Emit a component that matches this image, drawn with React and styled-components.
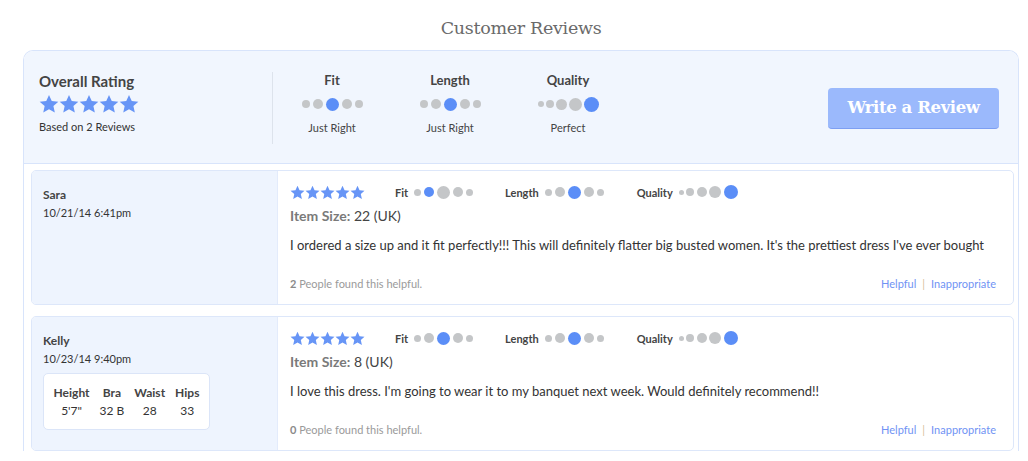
import React from 'react'
import styled, { createGlobalStyle } from 'styled-components'

const GlobalStyle = createGlobalStyle`
  body {
    margin: 0;
    background: #fff;
    font-family: Lato, "Open Sans", sans-serif;
    color: #444;
  }
`

const Page = styled.div`
  width: 996px;
  margin-left: 23px;
`

const Title = styled.h2`
  margin: 16px 0 10px;
  text-align: center;
  font-family: "DejaVu Serif", serif;
  font-weight: normal;
  font-size: 17.5px;
  line-height: 24px;
  letter-spacing: -0.3px;
  color: #6a6a6a;
`

const Box = styled.div`
  border: 1px solid #d8e4fb;
  border-bottom: none;
  border-radius: 10px 10px 0 0;
  overflow: hidden;
`

const Header = styled.div`
  display: flex;
  align-items: center;
  height: 112px;
  background: #f1f6fe;
  border-bottom: 1px solid #d8e4fb;
  padding: 0 19px 0 15px;
`

const Overall = styled.div`
  width: 233px;
  padding-bottom: 9px;
`

const OverallTitle = styled.div`
  font-weight: bold;
  font-size: 15px;
  line-height: 18px;
  color: #444;
`

const StarRow = styled.div`
  display: flex;
  gap: ${p => p.$gap}px;
  margin-top: ${p => p.$mt}px;
`

const Small = styled.div`
  font-size: 11px;
  line-height: 14px;
  margin-top: 6px;
  color: #333;
`

const Metrics = styled.div`
  display: flex;
  height: 72px;
  align-items: center;
  border-left: 1px solid #dde3ec;
  margin-top: 2px;
`

const Metric = styled.div`
  width: 118px;
  display: flex;
  flex-direction: column;
  align-items: center;
  padding-bottom: 11px;
`

const MetricLabel = styled.div`
  font-weight: bold;
  font-size: 13px;
  line-height: 18px;
  color: #444;
`

const MetricValue = styled.div`
  font-size: 11px;
  line-height: 14px;
  margin-top: 9px;
  color: #444;
`

const DotRow = styled.div`
  display: flex;
  align-items: center;
  gap: ${p => p.$gap}px;
  height: ${p => p.$h}px;
  margin-top: ${p => p.$mt}px;
`

const Dot = styled.span`
  display: block;
  width: ${p => p.$size}px;
  height: ${p => p.$size}px;
  border-radius: 50%;
  background: ${p => (p.$on ? '#5b8ef7' : '#c4c6c8')};
`

const WriteButton = styled.button`
  margin-left: auto;
  width: 171px;
  height: 41px;
  border: none;
  border-bottom: 1px solid #7d9ff3;
  border-radius: 4px;
  background: #9bb9fc;
  color: #fff;
  font-family: "DejaVu Serif", serif;
  font-weight: bold;
  font-size: 16.5px;
  letter-spacing: -0.4px;
  margin-top: 2px;
`

const List = styled.div`
  padding: 6px 4px 0 7px;
  display: flex;
  flex-direction: column;
  gap: 11px;
`

const Card = styled.div`
  display: flex;
  min-height: 133px;
  border: 1px solid #dde7fa;
  border-radius: 5px;
  overflow: hidden;
`

const Side = styled.div`
  width: 234px;
  flex-shrink: 0;
  background: #eef4fe;
  padding: 16px 0 0 11px;
  border-right: 1px solid #e3ebfb;
`

const Name = styled.div`
  font-weight: bold;
  font-size: 12px;
  line-height: 16px;
  color: #444;
`

const DateText = styled.div`
  font-size: 11px;
  line-height: 16px;
  margin-top: 2px;
  color: #333;
`

const Measures = styled.div`
  margin-top: 6px;
  width: 165px;
  height: 55px;
  background: #fff;
  border: 1px solid #dbe5f8;
  border-radius: 5px;
  display: flex;
  justify-content: center;
  align-items: center;
  gap: 10px;
`

const Measure = styled.div`
  display: flex;
  flex-direction: column;
  align-items: center;
  font-size: 12px;
  line-height: 18px;
  color: #333;
  b { color: #444; }
`

const Main = styled.div`
  flex: 1;
  display: flex;
  flex-direction: column;
  padding: 13px 17px 13px 12px;
`

const TopRow = styled.div`
  display: flex;
  align-items: center;
  height: 16px;
`

const Group = styled.div`
  display: flex;
  align-items: center;
  margin-left: ${p => p.$ml}px;
`

const GroupLabel = styled.span`
  font-weight: bold;
  font-size: 11px;
  color: #444;
  margin-right: 6px;
`

const ItemSize = styled.div`
  margin-top: 6px;
  font-size: 14px;
  line-height: 20px;
  color: #444;
  b { color: #7a7a7a; }
`

const Body = styled.div`
  margin-top: 9px;
  font-size: 13px;
  line-height: 20px;
  color: #333;
`

const Footer = styled.div`
  margin-top: auto;
  display: flex;
  justify-content: space-between;
  font-size: 11px;
  line-height: 14px;
  color: #9a9a9a;
  b { color: #8a8a8a; }
`

const Links = styled.div`
  display: flex;
  gap: 6px;
  color: #7093f4;
  span { color: #d7bf9a; }
`

const Star = ({ size }) => (
  <svg width={size} height={size} viewBox="0 0 24 24">
    <path fill="#6795f6" d="M12 1.2l3.3 7.2 7.9.8-5.9 5.3 1.7 7.8L12 18.3l-6.9 4 1.7-7.8L.8 9.2l7.9-.8z" />
  </svg>
)

const Stars = ({ size, gap, mt }) => (
  <StarRow $gap={gap} $mt={mt}>
    {[0, 1, 2, 3, 4].map(i => <Star key={i} size={size} />)}
  </StarRow>
)

const Dots = ({ sizes, on, gap, h, mt = 0 }) => (
  <DotRow $gap={gap} $h={h} $mt={mt}>
    {sizes.map((s, i) => <Dot key={i} $size={s} $on={i === on} />)}
  </DotRow>
)

const bell = [8, 10, 13, 10, 8]
const ramp = [6, 8, 11, 13, 15]
const smallBell = [7, 10, 13, 10, 7]
const smallRamp = [5, 8, 10, 12, 14]

const reviews = [
  {
    name: 'Sara',
    date: '10/21/14 6:41pm',
    size: '22 (UK)',
    fit: 1,
    text: "I ordered a size up and it fit perfectly!!! This will definitely flatter big busted women. It's the prettiest dress I've ever bought",
    helpful: 2,
  },
  {
    name: 'Kelly',
    date: '10/23/14 9:40pm',
    size: '8 (UK)',
    fit: 2,
    text: "I love this dress. I'm going to wear it to my banquet next week. Would definitely recommend!!",
    helpful: 0,
    measures: [['Height', '5\'7"'], ['Bra', '32 B'], ['Waist', '28'], ['Hips', '33']],
  },
]

export default function App() {
  return (
    <>
      <GlobalStyle />
      <Page>
        <Title>Customer Reviews</Title>
        <Box>
          <Header>
            <Overall>
              <OverallTitle>Overall Rating</OverallTitle>
              <Stars size={20} gap={-0.6} mt={4} />
              <Small>Based on 2 Reviews</Small>
            </Overall>
            <Metrics>
              <Metric>
                <MetricLabel>Fit</MetricLabel>
                <Dots sizes={bell} on={2} gap={3} h={15} mt={8} />
                <MetricValue>Just Right</MetricValue>
              </Metric>
              <Metric>
                <MetricLabel>Length</MetricLabel>
                <Dots sizes={bell} on={2} gap={3} h={15} mt={8} />
                <MetricValue>Just Right</MetricValue>
              </Metric>
              <Metric>
                <MetricLabel>Quality</MetricLabel>
                <Dots sizes={ramp} on={4} gap={2} h={15} mt={8} />
                <MetricValue>Perfect</MetricValue>
              </Metric>
            </Metrics>
            <WriteButton>Write a Review</WriteButton>
          </Header>
          <List>
            {reviews.map(r => (
              <Card key={r.name}>
                <Side>
                  <Name>{r.name}</Name>
                  <DateText>{r.date}</DateText>
                  {r.measures && (
                    <Measures>
                      {r.measures.map(([k, v]) => (
                        <Measure key={k}>
                          <b>{k}</b>
                          <span>{v}</span>
                        </Measure>
                      ))}
                    </Measures>
                  )}
                </Side>
                <Main>
                  <TopRow>
                    <Stars size={15} gap={-0.4} mt={0} />
                    <Group $ml={30}>
                      <GroupLabel>Fit</GroupLabel>
                      <Dots sizes={smallBell} on={r.fit} gap={3} h={14} />
                    </Group>
                    <Group $ml={32}>
                      <GroupLabel>Length</GroupLabel>
                      <Dots sizes={smallBell} on={2} gap={3} h={14} />
                    </Group>
                    <Group $ml={33}>
                      <GroupLabel>Quality</GroupLabel>
                      <Dots sizes={smallRamp} on={4} gap={2.5} h={14} />
                    </Group>
                  </TopRow>
                  <ItemSize><b>Item Size:</b> {r.size}</ItemSize>
                  <Body>{r.text}</Body>
                  <Footer>
                    <div><b>{r.helpful}</b> People found this helpful.</div>
                    <Links>Helpful <span>|</span> Inappropriate</Links>
                  </Footer>
                </Main>
              </Card>
            ))}
          </List>
        </Box>
      </Page>
    </>
  )
}
